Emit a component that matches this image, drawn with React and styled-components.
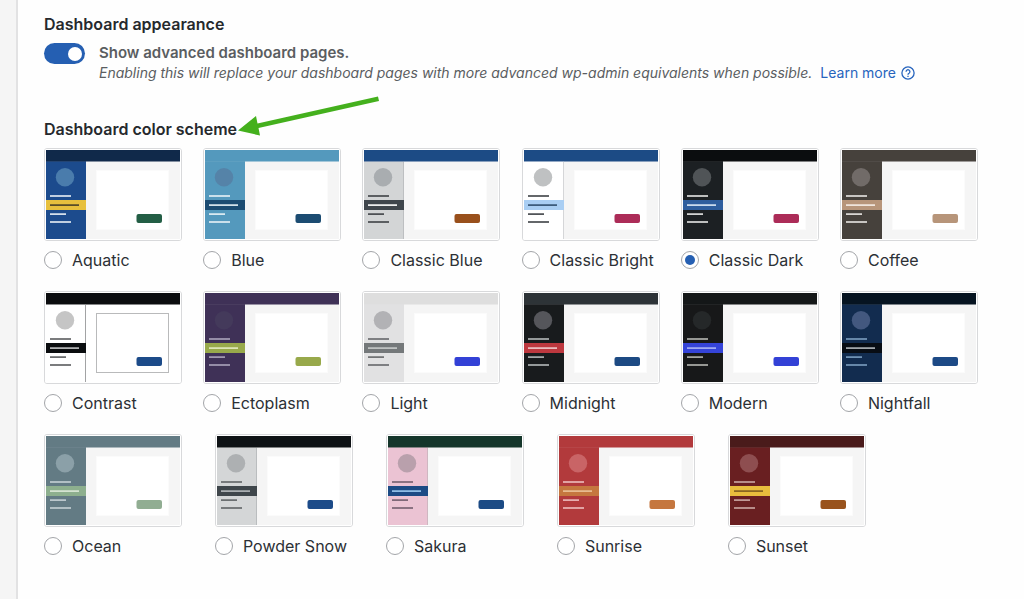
import React, { useState } from 'react';
import styled, { createGlobalStyle } from 'styled-components';

const GlobalStyle = createGlobalStyle`
  *, *::before, *::after { box-sizing: border-box; }
  body {
    margin: 0;
    background: #fefefe;
    color: #2c3035;
    font-family: Inter, "Liberation Sans", sans-serif;
    font-size: 16px;
  }
`;

const Page = styled.div`
  display: flex;
  min-height: 100vh;
`;

const SideStrip = styled.aside`
  flex: 0 0 18px;
  background: #f5f5f5;
  border-right: 2px solid #e2e2e3;
`;

const Content = styled.main`
  flex: 1;
  min-width: 0;
  padding: 12px 46px 40px 26px;
`;

const Heading = styled.h2`
  margin: 0;
  font-size: 16px;
  line-height: 24px;
  font-weight: 600;
  color: #26292d;
`;

const ToggleRow = styled.div`
  display: flex;
  gap: 14px;
  margin-top: 7px;
`;

const Switch = styled.input`
  appearance: none;
  flex: none;
  display: flex;
  align-items: center;
  width: 41px;
  height: 21px;
  margin: 0;
  padding: 0 3px;
  border-radius: 11px;
  background: #949494;
  cursor: pointer;

  &::before {
    content: "";
    width: 14px;
    height: 14px;
    border-radius: 50%;
    background: #fff;
  }
  &:checked {
    justify-content: flex-end;
    background: #255fb2;
  }
`;

const ToggleText = styled.div`
  font-size: 14px;
  line-height: 20px;
  color: #5a5d61;
`;

const ToggleLabel = styled.label`
  display: block;
  font-size: 15px;
  font-weight: 600;
`;

const Hint = styled.em`
  margin-right: 8px;
`;

const LearnMore = styled.a`
  display: inline-flex;
  align-items: center;
  gap: 5px;
  color: #2764bd;
  text-decoration: none;
`;

const SchemeSection = styled.section`
  margin-top: 34px;
`;

const SchemeTitle = styled.div`
  position: relative;
  width: fit-content;
`;

const Arrow = styled.svg`
  position: absolute;
  left: 192px;
  bottom: 0;
  z-index: 1;
  pointer-events: none;
`;

const Rows = styled.div`
  display: flex;
  flex-direction: column;
  gap: 20px;
  margin-top: 7px;
`;

const Row = styled.div`
  display: flex;
  flex-wrap: wrap;
  justify-content: space-between;
  row-gap: 20px;
  padding-right: ${(p) => (p.$short ? '12%' : '0')};
`;

const Option = styled.label`
  display: flex;
  flex-direction: column;
  gap: 8px;
  width: 138px;
  cursor: pointer;
`;

const Frame = styled.span`
  display: block;
  border: 1px solid #d8d9db;
  border-radius: 3px;
  background: #fff;
  height: 93px;
  overflow: hidden;

  svg { display: block; width: 100%; height: 100%; }
`;

const Caption = styled.span`
  display: flex;
  align-items: center;
  gap: 10px;
  line-height: 22px;
  white-space: nowrap;
`;

const Radio = styled.input`
  appearance: none;
  flex: none;
  display: grid;
  place-items: center;
  width: 18px;
  height: 18px;
  margin: 0;
  border: 1px solid #a3a5a9;
  border-radius: 50%;
  background: #fff;

  &:checked::before {
    content: "";
    width: 10px;
    height: 10px;
    border-radius: 50%;
    background: #255fb2;
  }
`;

const scheme = (name, bar, side, avatar, line, active, activeLine, button, extra = {}) => ({
  name, bar, side, avatar, line, active, activeLine, button, ...extra,
});

const SCHEMES = [
  [
    scheme('Aquatic', '#10294a', '#1c4b8d', '#4a7cac', '#e9f0f5', '#e7c03d', '#4a4226', '#235e45'),
    scheme('Blue', '#5499bd', '#5499bd', '#5583a8', '#e8f2f7', '#1c4c72', '#e8f2f7', '#1c4c72'),
    scheme('Classic Blue', '#1c4b85', '#d3d5d6', '#a9adb0', '#3f4246', '#3f464c', '#ffffff', '#99501c', { edge: '#bdbfc1' }),
    scheme('Classic Bright', '#1c4b85', '#ffffff', '#bfc1c2', '#3f4246', '#a9cef3', '#31506f', '#ac2c58', { edge: '#d5d6d8' }),
    scheme('Classic Dark', '#0b0d0f', '#1c2023', '#505457', '#e7e7e7', '#2e5d9d', '#dce8f6', '#ac2c58'),
    scheme('Coffee', '#46413c', '#46413c', '#716b68', '#e9e7e4', '#b7957a', '#f5ede6', '#b7957a'),
  ],
  [
    scheme('Contrast', '#0b0d0f', '#ffffff', '#c5c5c5', '#5b5d5f', '#0b0d0f', '#c3c5c6', '#1c4b89', { edge: '#a2a3a4', panel: '#ffffff', outline: '#b9babb' }),
    scheme('Ectoplasm', '#3f3157', '#3f3157', '#443a5b', '#aba3bb', '#98a94b', '#e4ebc2', '#98a94b'),
    scheme('Light', '#dedede', '#e1e1e2', '#b2b2b5', '#66686a', '#74787a', '#c8caca', '#3341d6'),
    scheme('Midnight', '#2d3337', '#181b1d', '#55565b', '#b4b8ba', '#bd383f', '#efcacc', '#1d4a83'),
    scheme('Modern', '#141718', '#171819', '#252829', '#b6b7b2', '#3544d9', '#abb5f4', '#3341d6'),
    scheme('Nightfall', '#061421', '#122c4f', '#43587f', '#7c9fc0', '#080d14', '#b4b9bd', '#1d4a86'),
  ],
  [
    scheme('Ocean', '#637b84', '#637b84', '#8ba0a8', '#c5d0d4', '#8daf8e', '#dce9d9', '#91ad92'),
    scheme('Powder Snow', '#0e1215', '#d4d6d7', '#adb0b2', '#606467', '#3f464b', '#b6babd', '#1c4b89', { edge: '#babdbf' }),
    scheme('Sakura', '#15362b', '#ebc3d3', '#b9a0ac', '#745f6e', '#1c4b85', '#9ccaf0', '#1c4b85', { edge: '#cfb7c1' }),
    scheme('Sunrise', '#b23a3c', '#b23a3c', '#c96466', '#edbdbd', '#c5773f', '#eac299', '#c5773f'),
    scheme('Sunset', '#4a1b1b', '#691f21', '#8e4e50', '#cba7a4', '#e8bd3d', '#805e1e', '#99531d'),
  ],
];

function Preview({ s }) {
  return (
    <svg viewBox="0 0 136 91" aria-hidden="true">
      <rect width="136" height="91" fill="#fff" />
      <rect x="40" y="1" width="95" height="89" fill={s.panel || '#f5f5f5'} />
      <rect x="1" y="12" width="40" height="78" fill={s.side} />
      <rect x="1" y="1" width="134" height="11.5" fill={s.bar} />
      <rect x="1" y="12.5" width="40" height="0.5" fill="#fff" opacity="0.12" />
      {s.edge && <rect x="40" y="13" width="1" height="77" fill={s.edge} />}
      <circle cx="20" cy="28.3" r="9.2" fill={s.avatar} />
      <rect x="5" y="46.2" width="21" height="1.6" fill={s.line} />
      <rect x="1" y="51" width="40" height="10" fill={s.active} />
      <rect x="5" y="55.3" width="29" height="1.6" fill={s.activeLine} />
      <rect x="5" y="64.3" width="16" height="1.6" fill={s.line} />
      <rect x="5" y="72.2" width="21" height="1.6" fill={s.line} />
      <rect x="51.5" y="21.5" width="72" height="59" fill="#fff" stroke={s.outline || '#fbfbfb'} />
      <rect x="91.5" y="65" width="25.5" height="9" rx="2" fill={s.button} />
    </svg>
  );
}

export default function App() {
  const [advanced, setAdvanced] = useState(true);
  const [selected, setSelected] = useState('Classic Dark');

  return (
    <>
      <GlobalStyle />
      <Page>
        <SideStrip />
        <Content>
          <Heading>Dashboard appearance</Heading>
          <ToggleRow>
            <Switch
              id="advanced"
              type="checkbox"
              role="switch"
              checked={advanced}
              onChange={(e) => setAdvanced(e.target.checked)}
            />
            <ToggleText>
              <ToggleLabel htmlFor="advanced">Show advanced dashboard pages.</ToggleLabel>
              <Hint>
                Enabling this will replace your dashboard pages with more advanced wp-admin equivalents when possible.
              </Hint>
              <LearnMore href="#learn-more">
                Learn more
                <svg width="14" height="14" viewBox="0 0 14 14" fill="none" stroke="currentColor" strokeWidth="1.3" aria-hidden="true">
                  <circle cx="7" cy="7" r="6.1" />
                  <path d="M5.1 5.7a1.9 1.9 0 1 1 2.9 1.6C7.3 7.7 7 8 7 8.7" />
                  <path d="M7 9.7v1.2" />
                </svg>
              </LearnMore>
            </ToggleText>
          </ToggleRow>

          <SchemeSection>
            <SchemeTitle>
              <Heading id="scheme-title">Dashboard color scheme</Heading>
              <Arrow width="144" height="46" viewBox="0 0 144 46" aria-hidden="true">
                <path d="M2 35.500L20 21L21.500 28.500L142 1.500L143 6L22.500 33L24 40.500Z" fill="#44b01d" />
              </Arrow>
            </SchemeTitle>
            <Rows role="radiogroup" aria-labelledby="scheme-title">
              {SCHEMES.map((row, i) => (
                <Row key={i} $short={row.length < 6}>
                  {row.map((s) => (
                    <Option key={s.name}>
                      <Frame>
                        <Preview s={s} />
                      </Frame>
                      <Caption>
                        <Radio
                          type="radio"
                          name="scheme"
                          value={s.name}
                          checked={selected === s.name}
                          onChange={() => setSelected(s.name)}
                        />
                        {s.name}
                      </Caption>
                    </Option>
                  ))}
                </Row>
              ))}
            </Rows>
          </SchemeSection>
        </Content>
      </Page>
    </>
  );
}
